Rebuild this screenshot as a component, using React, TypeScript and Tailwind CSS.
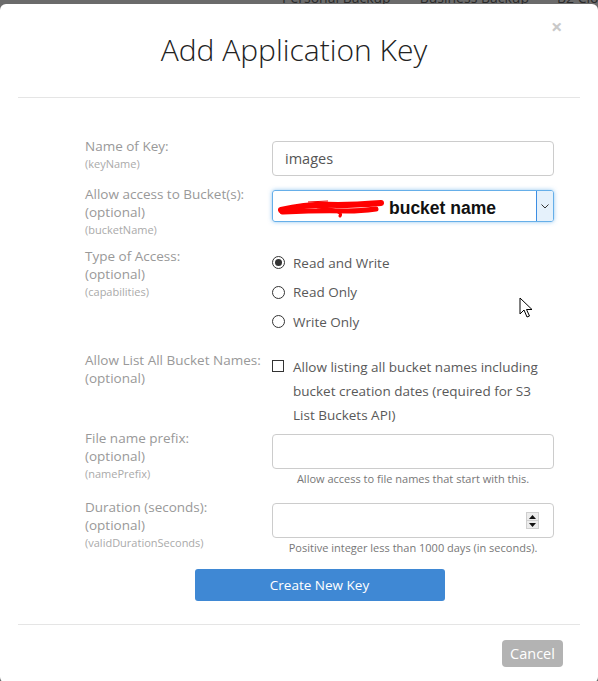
import React from "react";

const font = { fontFamily: '"Open Sans", "Liberation Sans", sans-serif' };

function Label({ main, extra, sub }: { main: string; extra?: boolean; sub?: string }) {
  return (
    <div className="w-[187px] shrink-0 text-[#999999]">
      <div className="text-[13.5px] leading-[18px]">{main}</div>
      {extra && <div className="text-[13.5px] leading-[18px]">(optional)</div>}
      {sub && <div className="text-[11px] leading-[18px] text-[#aaaaaa]">{sub}</div>}
    </div>
  );
}

function Radio({ checked, label }: { checked?: boolean; label: string }) {
  return (
    <div className="flex items-center h-[29.5px]">
      <span className="w-[13px] h-[13px] rounded-full border border-[#333] flex items-center justify-center ml-[0px] mr-[8px] bg-white">
        {checked && <span className="w-[7px] h-[7px] rounded-full bg-[#333]" />}
      </span>
      <span className="text-[13.5px] text-[#595959]">{label}</span>
    </div>
  );
}

export default function App() {
  return (
    <div className="w-[598px] h-[681px] bg-[#6b6b6b] overflow-hidden relative" style={font}>
      <div className="h-[4px] overflow-hidden relative">
        <div className="absolute left-[282px] top-[-13px] text-[14px] text-[#2a2a2a] whitespace-nowrap flex">
          <span>Personal Backup</span>
          <span className="ml-[29px]">Business Backup</span>
          <span className="ml-[28px]">B2 Cloud</span>
        </div>
      </div>
      <div className="bg-white rounded-[6px] h-[679px] relative">
        <div className="absolute left-[551px] top-[13px] text-[20px] font-bold text-[#c9c9c9] leading-[20px]">×</div>
        <div className="pt-[25px] h-[93px] text-center">
          <div className="text-[30px] font-light text-[#222] leading-[42px] -ml-[10px]">Add Application Key</div>
        </div>
        <div className="mx-[18px] h-px bg-[#e5e5e5]" />
        <div className="pl-[85px] pr-[44px] pt-[39px]">
          {/* Row 1 */}
          <div className="flex h-[48px]">
            <Label main="Name of Key:" sub="(keyName)" />
            <div className="flex-1 mt-[4px]">
              <div className="h-[35px] border border-[#cccccc] rounded-[4px] flex items-center px-[12px] text-[14.5px] text-[#555]">
                images
              </div>
            </div>
          </div>
          {/* Row 2 */}
          <div className="flex h-[62px]">
            <Label main="Allow access to Bucket(s):" extra sub="(bucketName)" />
            <div className="flex-1 mt-[5px]">
              <div className="h-[32px] border border-[#66afe9] rounded-[3px] shadow-[0_0_4px_rgba(102,175,233,0.7)] flex items-stretch">
                <div className="flex-1 flex items-center pl-[5px] pt-[4px]">
                  <svg width="106" height="20" viewBox="0 0 106 20" className="shrink-0">
                    <path d="M3 12 C20 8 40 6 60 7 C75 7 90 6 103 5" stroke="#ff0000" strokeWidth="6" fill="none" strokeLinecap="round" />
                    <path d="M4 14 C25 13 45 12 70 13 C80 13 90 12 98 11" stroke="#ff0000" strokeWidth="5" fill="none" strokeLinecap="round" />
                    <path d="M40 9 C55 11 65 14 62 18" stroke="#ff0000" strokeWidth="3" fill="none" strokeLinecap="round" />
                    <path d="M30 4 L50 3" stroke="#ee0000" strokeWidth="1" fill="none" />
                  </svg>
                  <span className="ml-[5px] text-[17.5px] font-bold text-[#111] leading-[20px]" style={{ fontFamily: '"Liberation Sans", Arial, sans-serif' }}>
                    bucket name
                  </span>
                </div>
                <div className="w-[17px] bg-[#e5f1fb] border-l border-[#3c8ee3] flex items-center justify-center rounded-r-[2px]">
                  <svg width="8" height="5" viewBox="0 0 8 5">
                    <path d="M0.5 0.5 L4 4 L7.5 0.5" stroke="#333" strokeWidth="1" fill="none" />
                  </svg>
                </div>
              </div>
            </div>
          </div>
          {/* Row 3 */}
          <div className="flex h-[104px]">
            <Label main="Type of Access:" extra sub="(capabilities)" />
            <div className="flex-1 mt-[1px]">
              <Radio checked label="Read and Write" />
              <Radio label="Read Only" />
              <Radio label="Write Only" />
            </div>
          </div>
          {/* Row 4 */}
          <div className="flex h-[78px]">
            <Label main="Allow List All Bucket Names:" extra />
            <div className="flex-1 flex mt-[3px]">
              <span className="w-[12px] h-[12px] border border-[#333] bg-white mt-[6px] mr-[9px] shrink-0" />
              <div className="text-[13.5px] leading-[24px] text-[#595959] pt-[1px]">
                Allow listing all bucket names including bucket creation dates (required for S3 List Buckets API)
              </div>
            </div>
          </div>
          {/* Row 5 */}
          <div className="flex h-[69px]">
            <Label main="File name prefix:" extra sub="(namePrefix)" />
            <div className="flex-1 mt-[5px]">
              <div className="h-[35px] border border-[#cccccc] rounded-[4px]" />
              <div className="text-center text-[11px] leading-[20px] text-[#777]">Allow access to file names that start with this.</div>
            </div>
          </div>
          {/* Row 6 */}
          <div className="flex h-[71px]">
            <Label main="Duration (seconds):" extra sub="(validDurationSeconds)" />
            <div className="flex-1 mt-[5px]">
              <div className="h-[35px] border border-[#cccccc] rounded-[4px] flex items-center justify-end pr-[14px]">
                <div className="w-[13px] h-[17px] border border-[#cfcfcf] bg-[#ececec] flex flex-col">
                  <div className="flex-1 flex items-center justify-center border-b border-[#cfcfcf]">
                    <svg width="7" height="4" viewBox="0 0 7 4"><path d="M0 4 L3.5 0 L7 4 Z" fill="#111" /></svg>
                  </div>
                  <div className="flex-1 flex items-center justify-center">
                    <svg width="7" height="4" viewBox="0 0 7 4"><path d="M0 0 L3.5 4 L7 0 Z" fill="#111" /></svg>
                  </div>
                </div>
              </div>
              <div className="text-center text-[11px] leading-[20px] text-[#777]">Positive integer less than 1000 days (in seconds).</div>
            </div>
          </div>
          <div className="flex justify-center">
            <button className="w-[250px] h-[32px] rounded-[3px] bg-[#3f88d4] text-white text-[13.5px]">Create New Key</button>
          </div>
        </div>
        <div className="mx-[18px] h-px bg-[#e5e5e5] mt-[23px]" />
        <div className="flex justify-end pr-[35px] pt-[15px]">
          <button className="w-[61px] h-[27px] rounded-[4px] bg-[#b3b3b3] text-white text-[14.5px]">Cancel</button>
        </div>
        <svg className="absolute left-[519px] top-[293px]" width="14" height="22" viewBox="0 0 14 22">
          <path d="M1 1 L1 17 L5 13 L8 20 L10.5 19 L7.5 12.5 L13 12.5 Z" fill="white" stroke="#000" strokeWidth="1" strokeLinejoin="round" />
        </svg>
      </div>
    </div>
  );
}
